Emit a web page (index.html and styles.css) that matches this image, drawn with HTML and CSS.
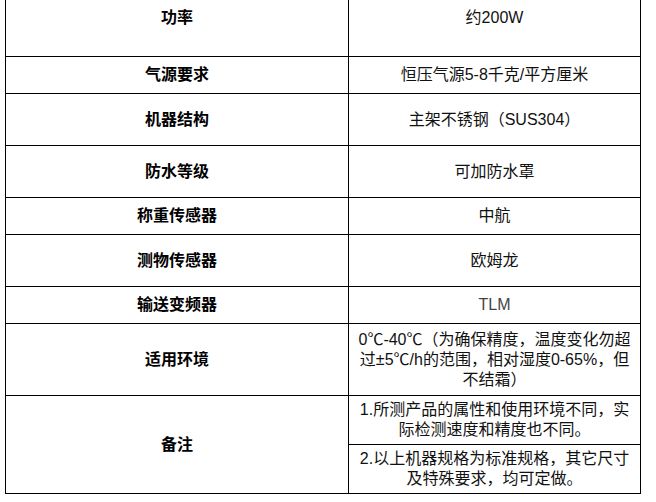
FILE: index.html
```html
<!DOCTYPE html>
<html lang="zh">
<head>
<meta charset="utf-8">
<title>参数表</title>
<link rel="stylesheet" href="styles.css">
</head>
<body>
<table class="spec">
  <colgroup><col class="c1"><col class="c2"></colgroup>
  <tr class="r77"><th>功率</th><td>约200W</td></tr>
  <tr class="r37"><th>气源要求</th><td>恒压气源5-8千克/平方厘米</td></tr>
  <tr class="r52"><th>机器结构</th><td>主架不锈钢（SUS304）</td></tr>
  <tr class="r52"><th>防水等级</th><td>可加防水罩</td></tr>
  <tr class="r37"><th>称重传感器</th><td>中航</td></tr>
  <tr class="r52"><th>测物传感器</th><td>欧姆龙</td></tr>
  <tr class="r37"><th>输送变频器</th><td class="gray">TLM</td></tr>
  <tr class="r72"><th>适用环境</th><td>0℃-40℃（为确保精度，温度变化勿超过±5℃/h的范围，相对湿度0-65%，但不结霜）</td></tr>
  <tr class="r49"><th rowspan="2">备注</th><td>1.所测产品的属性和使用环境不同，实际检测速度和精度也不同。</td></tr>
  <tr class="r49"><td>2.以上机器规格为标准规格，其它尺寸及特殊要求，均可定做。</td></tr>
</table>
</body>
</html>
```
FILE: styles.css
```css
html, body {
  margin: 0;
  padding: 0;
  background: #fff;
}
body {
  overflow: hidden;
}
.spec {
  border-collapse: collapse;
  table-layout: fixed;
  width: 635px;
  margin: -21px 0 0 5px;
  font-family: "Liberation Sans", "Noto Sans CJK SC", sans-serif;
  font-size: 16px;
  line-height: 20px;
  color: #000;
}
.c1 { width: 343px; }
.c2 { width: 292px; }
.spec th,
.spec td {
  border: 1px solid #000;
  text-align: center;
  vertical-align: middle;
  padding: 0 8px;
}
.spec th {
  font-weight: bold;
}
.spec td {
  color: #111;
}
.spec td.gray {
  color: #444;
}
.r77 { height: 77px; }
.r37 { height: 37px; }
.r52 { height: 52px; }
.r72 { height: 72px; }
.r49 { height: 49px; }
```
